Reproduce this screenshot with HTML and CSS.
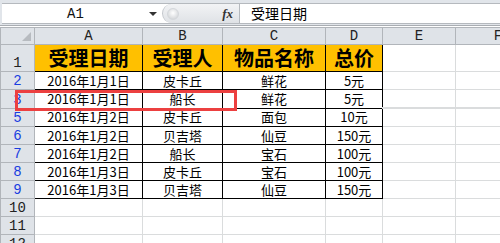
FILE: index.html
```html
<!DOCTYPE HTML>
<html>

<head>
  <meta charset="UTF-8">
  <title>Sheet1</title>
  <link rel="stylesheet" href="styles.css">
</head>

<body>
  <div class="top">
    <div class="fbar">
      <div class="namebox">
        <span class="ref">A1</span>
        <span class="drop"></span>
      </div>
      <div class="split">
        <span class="knob"></span>
        <span class="fx">fx</span>
      </div>
      <div class="input">受理日期</div>
    </div>
  </div>

  <div class="sheet">
    <table class="grid">
      <colgroup>
        <col class="c-h">
        <col class="c-a">
        <col class="c-b">
        <col class="c-c">
        <col class="c-d">
        <col class="c-e">
        <col class="c-f">
      </colgroup>
      <tr class="colhead">
        <th class="corner"><span class="tri"></span></th>
        <th>A</th>
        <th>B</th>
        <th>C</th>
        <th>D</th>
        <th>E</th>
        <th>F</th>
      </tr>
      <tr class="r1">
        <th class="rh">1</th>
        <td class="d hd">受理日期</td>
        <td class="d hd">受理人</td>
        <td class="d hd">物品名称</td>
        <td class="d hd">总价</td>
        <td></td>
        <td></td>
      </tr>
      <tr>
        <th class="rh blue">2</th>
        <td class="d">2016年1月1日</td>
        <td class="d">皮卡丘</td>
        <td class="d">鲜花</td>
        <td class="d">5元</td>
        <td></td>
        <td></td>
      </tr>
      <tr>
        <th class="rh blue">3</th>
        <td class="d">2016年1月1日</td>
        <td class="d">船长</td>
        <td class="d">鲜花</td>
        <td class="d">5元</td>
        <td></td>
        <td></td>
      </tr>
      <tr class="after-hidden">
        <th class="rh blue">5</th>
        <td class="d">2016年1月2日</td>
        <td class="d">皮卡丘</td>
        <td class="d">面包</td>
        <td class="d">10元</td>
        <td></td>
        <td></td>
      </tr>
      <tr>
        <th class="rh blue">6</th>
        <td class="d">2016年1月2日</td>
        <td class="d">贝吉塔</td>
        <td class="d">仙豆</td>
        <td class="d">150元</td>
        <td></td>
        <td></td>
      </tr>
      <tr>
        <th class="rh blue">7</th>
        <td class="d">2016年1月2日</td>
        <td class="d">船长</td>
        <td class="d">宝石</td>
        <td class="d">100元</td>
        <td></td>
        <td></td>
      </tr>
      <tr>
        <th class="rh blue">8</th>
        <td class="d">2016年1月3日</td>
        <td class="d">皮卡丘</td>
        <td class="d">宝石</td>
        <td class="d">100元</td>
        <td></td>
        <td></td>
      </tr>
      <tr>
        <th class="rh blue">9</th>
        <td class="d">2016年1月3日</td>
        <td class="d">贝吉塔</td>
        <td class="d">仙豆</td>
        <td class="d">150元</td>
        <td></td>
        <td></td>
      </tr>
      <tr>
        <th class="rh">10</th>
        <td></td><td></td><td></td><td></td><td></td><td></td>
      </tr>
      <tr>
        <th class="rh">11</th>
        <td></td><td></td><td></td><td></td><td></td><td></td>
      </tr>
      <tr>
        <th class="rh">12</th>
        <td></td><td></td><td></td><td></td><td></td><td></td>
      </tr>
    </table>

    <div class="mark"></div>
  </div>
</body>

</html>
```

FILE: styles.css
```css
body {
  margin: 0;
  width: 500px;
  height: 243px;
  overflow: hidden;
  background: #fff;
  font-family: "Noto Sans CJK SC", "Noto Sans", sans-serif;
}

/* 编辑栏 */
.top {
  height: 26px;
  padding-top: 3px;
  box-sizing: border-box;
  background: #e1e5ea;
  border-bottom: 1px solid #a9adb2;
}

.fbar {
  display: flex;
  height: 19px;
  background: #fff;
  border-top: 1px solid #b5b9be;
  border-bottom: 1px solid #b5b9be;
  margin-left: 2px;
}

.namebox {
  display: flex;
  align-items: center;
  width: 160px;
}

.ref {
  flex: 1;
  text-align: center;
  font-family: "Liberation Mono", monospace;
  font-size: 14px;
  color: #111;
}

.drop {
  width: 0;
  height: 0;
  margin-right: 5px;
  border-left: 4px solid transparent;
  border-right: 4px solid transparent;
  border-top: 4px solid #333;
}

.split {
  display: flex;
  align-items: center;
  width: 76px;
  background: linear-gradient(to bottom, #f2f3f5, #dfe2e6);
  border-left: 1px solid #c3c7cc;
  border-right: 1px solid #b5b9be;
  border-radius: 10px 0 0 10px;
}

.knob {
  width: 10px;
  height: 10px;
  margin-left: 4px;
  border-radius: 50%;
  background: radial-gradient(circle at 50% 40%, #fff, #c9ccd0);
  border: 1px solid #d4d7db;
}

.fx {
  margin-left: auto;
  margin-right: 6px;
  font-family: "Liberation Serif", serif;
  font-style: italic;
  font-weight: bold;
  font-size: 13px;
  color: #333;
}

.input {
  flex: 1;
  padding-left: 11px;
  font-size: 14px;
  line-height: 19px;
  color: #000;
}

/* 表格 */
.sheet {
  position: relative;
  border-top: 1px solid #fff;
}

.grid {
  border-collapse: collapse;
  table-layout: fixed;
  width: 540px;
}

.c-h { width: 34px; }
.c-a { width: 108px; }
.c-b { width: 80px; }
.c-c { width: 103px; }
.c-d { width: 57px; }
.c-e { width: 73px; }
.c-f { width: 85px; }

.grid td,
.grid th {
  height: 17px;
  padding: 0;
  border: 1px solid #dadcdd;
  font-size: 13px;
  font-weight: normal;
  text-align: center;
  white-space: nowrap;
  overflow: hidden;
}

.colhead th {
  height: 16px;
  background: #dfe3e8;
  border: 1px solid #b1b5ba;
  font-family: "Liberation Mono", monospace;
  font-size: 14px;
  color: #222;
  line-height: 16px;
}

.corner {
  position: relative;
}

.tri {
  position: absolute;
  right: 3px;
  bottom: 3px;
  width: 0;
  height: 0;
  border-left: 9px solid transparent;
  border-bottom: 9px solid #b7bbc0;
}

.grid th.rh {
  background: #dfe3e8;
  border: 1px solid #b1b5ba;
  font-family: "Liberation Mono", monospace;
  font-size: 14px;
  color: #222;
  vertical-align: bottom;
  line-height: 16px;
}

.grid th.blue {
  color: #1a3ee0;
}

.r1 td,
.r1 th {
  height: 26px;
}

.grid td.d {
  border: 1px solid #000;
  color: #000;
  line-height: 16px;
}

.grid td.hd {
  background: #ffc000;
  font-size: 20px;
  font-weight: bold;
  line-height: 24px;
}

.after-hidden td,
.after-hidden th {
  border-top-width: 2px;
}

/* 红框标记 */
.mark {
  position: absolute;
  left: 15px;
  top: 63px;
  width: 216px;
  height: 15px;
  border: 3px solid #ec4040;
}
```
